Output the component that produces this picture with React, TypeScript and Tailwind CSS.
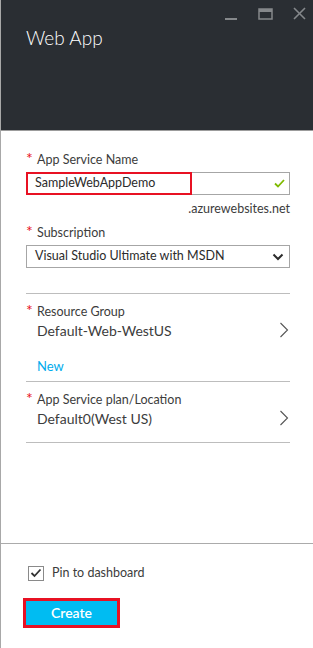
const FONT = { fontFamily: '"Segoe UI", Lato, "Open Sans", sans-serif' }

function Label({ text }: { text: string }) {
  return (
    <div className="flex items-center h-[18px] text-[12.5px] text-[#3c3c3c] leading-[18px]">
      <span className="text-[#e81123] w-[11px] text-[16px] leading-none -mt-[4px]">*</span>
      <span>{text}</span>
    </div>
  )
}

function Picker({ label, value }: { label: string; value: string }) {
  return (
    <div className="flex items-center justify-between">
      <div className="flex flex-col">
        <Label text={label} />
        <div className="text-[14px] leading-[20px] text-[#3c3c3c] ml-[11px]">{value}</div>
      </div>
      <svg width="10" height="16" viewBox="0 0 10 16" className="mt-[16px] mr-[1px]">
        <path d="M1.5 1 L8.5 8 L1.5 15" fill="none" stroke="#555" strokeWidth="1.1" />
      </svg>
    </div>
  )
}

export default function App() {
  return (
    <div style={FONT} className="w-[313px] h-[648px] flex flex-col bg-white border-l border-[#a8a8a8] overflow-hidden">
      {/* Blade header */}
      <div className="relative h-[131px] shrink-0 bg-[#2a2e33] border-b border-[#9c9c9c]">
        <div className="absolute top-[5px] right-[7px] flex items-center gap-[20px] text-[#85888b]">
          <svg width="14" height="14" viewBox="0 0 14 14" className="mt-[1px]">
            <rect x="1" y="12" width="12" height="2" fill="currentColor" />
          </svg>
          <svg width="15" height="14" viewBox="0 0 15 14">
            <rect x="1" y="3" width="13" height="10" fill="none" stroke="currentColor" strokeWidth="1.5" />
            <rect x="1" y="3" width="13" height="3" fill="currentColor" />
          </svg>
          <svg width="13" height="14" viewBox="0 0 13 14">
            <path d="M1 2 L12 13 M12 2 L1 13" stroke="currentColor" strokeWidth="1.6" />
          </svg>
        </div>
        <div className="pt-[26px] pl-[25px] text-[19px] leading-[24px] font-light text-white">Web App</div>
      </div>

      {/* Form */}
      <div className="flex-1 flex flex-col pl-[25px] pr-[23px] pt-[20px]">
        <Label text="App Service Name" />
        <div className="mt-[3px] h-[23px] border border-[#a6a6a6] flex items-center justify-between relative">
          <span className="text-[12.5px] text-[#2b2b2b] pl-[8px]">SampleWebAppDemo</span>
          <svg width="11" height="9" viewBox="0 0 11 9" className="mr-[4px]">
            <path d="M1 4.5 L4 7.5 L10 1" fill="none" stroke="#7fba00" strokeWidth="1.8" />
          </svg>
          <div className="absolute -top-px -left-px w-[166px] h-[23px] border-2 border-[#e81123]" />
        </div>
        <div className="mt-[5px] h-[18px] text-right text-[12.5px] leading-[18px] text-[#3c3c3c]">.azurewebsites.net</div>

        <div className="mt-[6px]">
          <Label text="Subscription" />
        </div>
        <div className="mt-[3px] h-[23px] border border-[#a6a6a6] flex items-center justify-between">
          <span className="text-[12.5px] text-[#2b2b2b] pl-[8px]">Visual Studio Ultimate with MSDN</span>
          <svg width="12" height="8" viewBox="0 0 12 8" className="mr-[5px]">
            <path d="M1.5 1.5 L6 6 L10.5 1.5" fill="none" stroke="#2b2b2b" strokeWidth="2" />
          </svg>
        </div>

        <div className="mt-[25px] border-t border-[#bdbdbd]" />
        <div className="mt-[9px]">
          <Picker label="Resource Group" value="Default-Web-WestUS" />
        </div>
        <div className="mt-[16px] ml-[11px] h-[18px] text-[13px] leading-[18px] text-[#00abec]">New</div>

        <div className="mt-[6px] border-t border-[#bdbdbd]" />
        <div className="mt-[9px]">
          <Picker label="App Service plan/Location" value="Default0(West US)" />
        </div>
        <div className="mt-[13px] border-t border-[#bdbdbd]" />
      </div>

      {/* Footer */}
      <div className="shrink-0 h-[105px] border-t border-[#ababab] pl-[22px] pt-[20px]">
        <div className="flex items-center gap-[8px] pl-[5px]">
          <div className="w-[16px] h-[15px] border border-[#8a8a8a] flex items-center justify-center">
            <svg width="12" height="10" viewBox="0 0 12 10">
              <path d="M1.5 5 L4.5 8 L10.5 1.5" fill="none" stroke="#333" strokeWidth="1.8" />
            </svg>
          </div>
          <span className="text-[12.5px] text-[#3c3c3c]">Pin to dashboard</span>
        </div>
        <div className="mt-[15px] w-[97px] h-[30px] border-[3px] border-[#e81123]">
          <button type="button" className="w-full h-full bg-[#00bcf2] text-white text-[14px] font-semibold flex items-center justify-center">
            Create
          </button>
        </div>
      </div>
    </div>
  )
}
